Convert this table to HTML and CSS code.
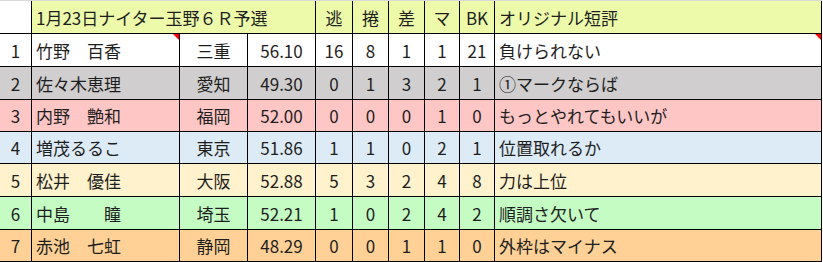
FILE: index.html
```html
<!DOCTYPE html>
<html lang="ja">
<head>
<meta charset="utf-8">
<title>予選</title>
<link rel="stylesheet" href="styles.css">
</head>
<body>
<div class="sheet">
  <div class="row head">
    <div class="c num blank"></div>
    <div class="c title">1月23日ナイター玉野６Ｒ予選</div>
    <div class="c n">逃</div>
    <div class="c n">捲</div>
    <div class="c n">差</div>
    <div class="c n">マ</div>
    <div class="c n">BK</div>
    <div class="c txt">オリジナル短評</div>
  </div>
  <div class="row r1">
    <div class="c num">1</div>
    <div class="c txt mark">竹野　百香</div>
    <div class="c n">三重</div>
    <div class="c n">56.10</div>
    <div class="c n">16</div>
    <div class="c n">8</div>
    <div class="c n">1</div>
    <div class="c n">1</div>
    <div class="c n">21</div>
    <div class="c txt mark">負けられない</div>
  </div>
  <div class="row r2">
    <div class="c num">2</div>
    <div class="c txt">佐々木恵理</div>
    <div class="c n">愛知</div>
    <div class="c n">49.30</div>
    <div class="c n">0</div>
    <div class="c n">1</div>
    <div class="c n">3</div>
    <div class="c n">2</div>
    <div class="c n">1</div>
    <div class="c txt">①マークならば</div>
  </div>
  <div class="row r3 short">
    <div class="c num">3</div>
    <div class="c txt">内野　艶和</div>
    <div class="c n">福岡</div>
    <div class="c n">52.00</div>
    <div class="c n">0</div>
    <div class="c n">0</div>
    <div class="c n">0</div>
    <div class="c n">1</div>
    <div class="c n">0</div>
    <div class="c txt">もっとやれてもいいが</div>
  </div>
  <div class="row r4 short">
    <div class="c num">4</div>
    <div class="c txt">増茂るるこ</div>
    <div class="c n">東京</div>
    <div class="c n">51.86</div>
    <div class="c n">1</div>
    <div class="c n">1</div>
    <div class="c n">0</div>
    <div class="c n">2</div>
    <div class="c n">1</div>
    <div class="c txt">位置取れるか</div>
  </div>
  <div class="row r5">
    <div class="c num">5</div>
    <div class="c txt">松井　優佳</div>
    <div class="c n">大阪</div>
    <div class="c n">52.88</div>
    <div class="c n">5</div>
    <div class="c n">3</div>
    <div class="c n">2</div>
    <div class="c n">4</div>
    <div class="c n">8</div>
    <div class="c txt">力は上位</div>
  </div>
  <div class="row r6">
    <div class="c num">6</div>
    <div class="c txt">中島　　瞳</div>
    <div class="c n">埼玉</div>
    <div class="c n">52.21</div>
    <div class="c n">1</div>
    <div class="c n">0</div>
    <div class="c n">2</div>
    <div class="c n">4</div>
    <div class="c n">2</div>
    <div class="c txt">順調さ欠いて</div>
  </div>
  <div class="row r7 short">
    <div class="c num">7</div>
    <div class="c txt">赤池　七虹</div>
    <div class="c n">静岡</div>
    <div class="c n">48.29</div>
    <div class="c n">0</div>
    <div class="c n">0</div>
    <div class="c n">1</div>
    <div class="c n">1</div>
    <div class="c n">0</div>
    <div class="c txt">外枠はマイナス</div>
  </div>
</div>
</body>
</html>
```
FILE: styles.css
```css
html, body {
  margin: 0;
  padding: 0;
  background: #ffffff;
}
.sheet {
  width: 822px;
  border-top: 1px solid #d9d9d9;
  font-family: "Noto Sans CJK JP", "Noto Sans", sans-serif;
  font-size: 17px;
  color: #1e1e1e;
}
.row {
  display: grid;
  grid-template-columns: 32px 148px 68px 68px 37px 36px 36px 35px 35px 327px;
  height: 33px;
}
.row.short {
  height: 32px;
}
.c {
  box-sizing: border-box;
  border-right: 1px solid #000;
  border-bottom: 1px solid #000;
  display: flex;
  align-items: center;
  white-space: pre;
  line-height: 1;
  position: relative;
}
.n, .num {
  justify-content: center;
}
.txt {
  padding-left: 4px;
}
.title {
  grid-column: span 3;
  padding-left: 4px;
}
.head {
  background: #ecfaaa;
}
.head .blank {
  background: #ffffff;
}
.r1 { background: #ffffff; }
.r2 { background: #d0cece; }
.r3 { background: #ffc6c6; }
.r4 { background: #ddebf7; }
.r5 { background: #fff2cc; }
.r6 { background: #c4fcc4; }
.r7 { background: #ffd196; }
.mark::after {
  content: "";
  position: absolute;
  top: 0;
  right: 0;
  border-top: 6px solid #ff0000;
  border-left: 6px solid transparent;
}
```
